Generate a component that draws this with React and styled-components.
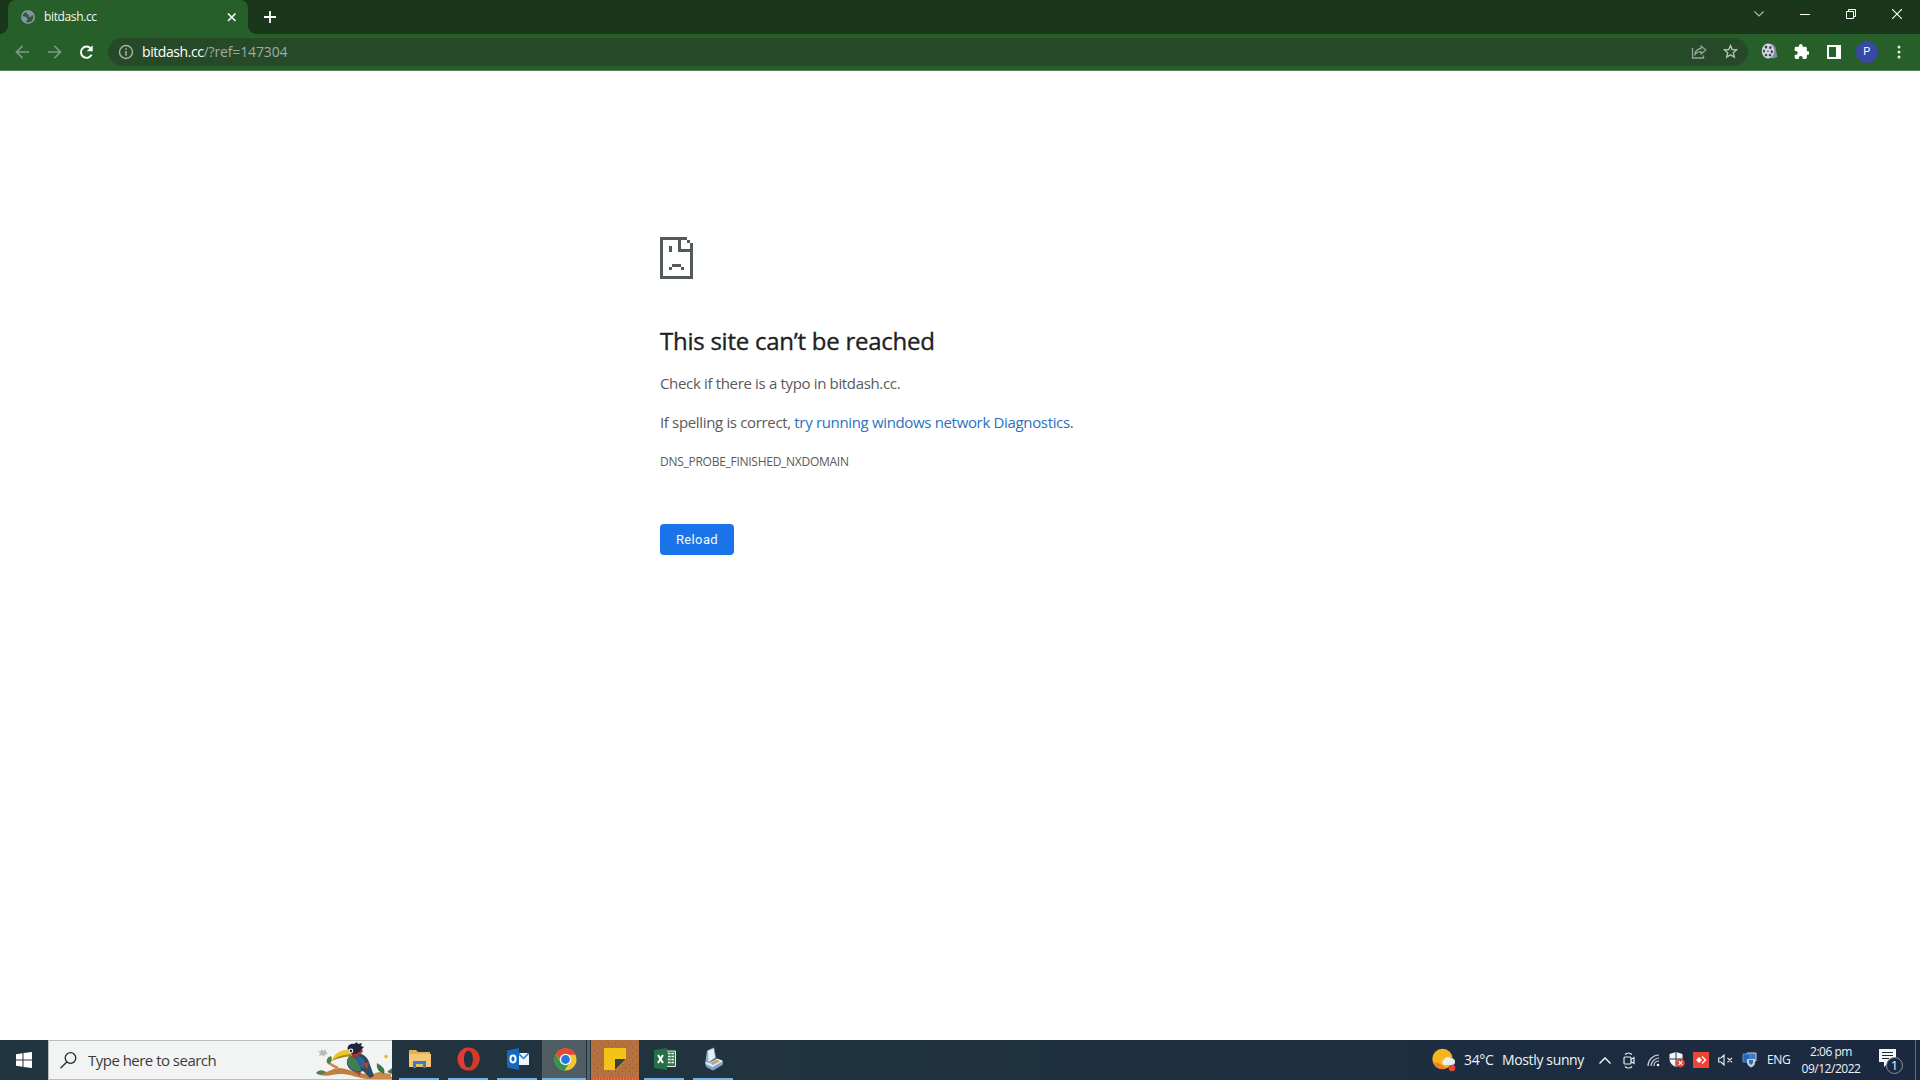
import React from 'react';
import styled, { createGlobalStyle, ThemeProvider } from 'styled-components';

const theme = {
  frame: '#1b371b',
  toolbar: '#275f2a',
  omnibox: '#264a28',
  link: '#2b71bd',
  text: '#595a5a',
  heading: '#202124',
  blue: '#1a73e8',
  underline: '#76b4e8',
};

const GlobalStyle = createGlobalStyle`
  * {
    box-sizing: border-box;
  }

  body {
    margin: 0;
    overflow: hidden;
    background: #fff;
    font-family: 'Open Sans', 'Noto Sans', sans-serif;
  }

  svg {
    display: block;
    flex-shrink: 0;
  }
`;

const Screen = styled.div`
  display: flex;
  flex-direction: column;
  width: 1920px;
  height: 1080px;
`;

/* Browser chrome */

const TitleBar = styled.div`
  display: flex;
  height: 34px;
  padding-left: 8px;
  background: ${p => p.theme.frame};
`;

const Tab = styled.div`
  position: relative;
  display: flex;
  align-items: center;
  width: 240px;
  height: 34px;
  padding: 0 9px 0 13px;
  border-radius: 8px 8px 0 0;
  background: ${p => p.theme.toolbar};

  &::before,
  &::after {
    content: '';
    position: absolute;
    bottom: 0;
    width: 8px;
    height: 8px;
  }

  &::before {
    left: -8px;
    background: radial-gradient(circle at 0 0, transparent 7.5px, ${p => p.theme.toolbar} 8px);
  }

  &::after {
    right: -8px;
    background: radial-gradient(circle at 100% 0, transparent 7.5px, ${p => p.theme.toolbar} 8px);
  }
`;

const TabTitle = styled.span`
  flex: 1;
  margin-left: 9px;
  color: #f4f8f2;
  font-size: 12px;
  line-height: 16px;
  letter-spacing: -0.37px;
`;

const NewTab = styled.div`
  display: flex;
  align-items: center;
  margin-left: 16px;
`;

const WindowButtons = styled.div`
  display: flex;
  margin-left: auto;
  height: 28px;
`;

const WindowButton = styled.div`
  display: flex;
  align-items: center;
  justify-content: center;
  width: 46px;
`;

const Toolbar = styled.div`
  display: flex;
  align-items: center;
  height: 37px;
  padding: 0 0 1px 15px;
  border-bottom: 1px solid #578059;
  background: ${p => p.theme.toolbar};
`;

const NavButton = styled.div`
  display: flex;
  width: ${p => p.width || 32}px;
`;

const Omnibox = styled.div`
  display: flex;
  align-items: center;
  width: 1640px;
  height: 28px;
  padding: 0 10px 0 10px;
  border-radius: 14px;
  background: ${p => p.theme.omnibox};
`;

const Url = styled.div`
  flex: 1;
  margin-left: 8px;
  color: #9eaaa4;
  font-size: 14px;
  line-height: 20px;
  letter-spacing: -0.13px;

  > span {
    color: #fff;
    letter-spacing: -0.43px;
  }
`;

const OmniboxIcon = styled.div`
  margin-left: ${p => p.gap || 0}px;
`;

const Extension = styled.div`
  display: flex;
  justify-content: center;
  width: 32.5px;
`;

const Extensions = styled.div`
  display: flex;
  align-items: center;
  margin-left: 5px;
`;

const Avatar = styled.div`
  width: 22px;
  height: 22px;
  border-radius: 50%;
  background: #3949a3;
  color: #fff;
  font: 11px/22px Roboto, sans-serif;
  text-align: center;
`;

/* Error page */

const Page = styled.main`
  display: flex;
  flex: 1;
  flex-direction: column;
  align-items: flex-start;
  padding: 166px 0 0 660px;
  color: ${p => p.theme.text};
`;

const Heading = styled.h1`
  margin: 45px 0 0;
  color: ${p => p.theme.heading};
  font-size: 24px;
  font-weight: 500;
  line-height: 34px;
  letter-spacing: -0.25px;
  -webkit-text-stroke: 0.35px ${p => p.theme.heading};
`;

const Message = styled.p`
  margin: ${p => p.top}px 0 0;
  font-size: 15px;
  line-height: 22px;
  letter-spacing: -0.34px;
`;

const DiagnosticsLink = styled.a`
  color: ${p => p.theme.link};
`;

const ErrorCode = styled.div`
  margin-top: 19px;
  font-size: 12px;
  line-height: 20px;
  letter-spacing: -0.27px;
`;

const ReloadButton = styled.button`
  width: 74px;
  height: 31px;
  margin: 52px 0 0;
  padding: 0;
  border: 0;
  border-radius: 4px;
  background: ${p => p.theme.blue};
  color: #f4f9ff;
  font: 400 13px/31px Roboto, sans-serif;
  letter-spacing: 0.35px;
`;

/* Taskbar */

const Taskbar = styled.footer`
  display: flex;
  height: 40px;
  background: linear-gradient(90deg, #20343f 0%, #20333f 40%, #1d2e41 75%, #1b2940 100%);
`;

const StartButton = styled.div`
  display: flex;
  align-items: center;
  justify-content: center;
  width: 48px;
`;

const SearchBox = styled.div`
  display: flex;
  align-items: center;
  width: 344px;
  padding-left: 11px;
  border: 1px solid #b9bcbf;
  border-right: 0;
  background: #f2f4f4;
`;

const SearchText = styled.span`
  flex: 1;
  margin-left: 11px;
  color: #3a3a3a;
  font-size: 15px;
  line-height: 22px;
  letter-spacing: -0.52px;
  white-space: nowrap;
`;

const Apps = styled.div`
  display: flex;
  margin-left: 3px;
`;

const AppButton = styled.div`
  display: flex;
  align-items: center;
  justify-content: center;
  width: 49px;
  height: 40px;
  padding-bottom: 2px;
  background: linear-gradient(${p => p.theme.underline}, ${p => p.theme.underline}) 4px 100% / 40px 2px no-repeat;
`;

const ActiveApp = styled(AppButton)`
  padding-right: 2px;
  background:
    linear-gradient(${p => p.theme.underline}, ${p => p.theme.underline}) 0 100% / 44px 2px no-repeat,
    linear-gradient(90deg, transparent 44px, #20343f 44px, #20343f 45.5px, #566269 45.5px, #566269 48px, #2b3b44 48px),
    radial-gradient(circle, #35704c 0.6px, transparent 0.9px) 0 0 / 7px 6px,
    #515b64;
`;

const AlertApp = styled(AppButton)`
  width: 48px;
  margin-right: 1px;
  background:
    repeating-linear-gradient(90deg, #e8502d 0, #e8502d 2px, #d98534 2px, #d98534 3px) 0 100% / 100% 2px no-repeat,
    radial-gradient(circle, #85563a 0.5px, transparent 0.9px) 0 0 / 7px 7px,
    radial-gradient(circle, #85563a 0.5px, transparent 0.9px) 3px 3px / 7px 7px,
    #b5713e;
`;

const Tray = styled.div`
  display: flex;
  align-items: center;
  margin-left: auto;
  color: #eef3f7;
`;

const Weather = styled.div`
  display: flex;
  align-items: center;
  width: 161px;
  font-size: 14px;
  line-height: 20px;
  letter-spacing: -0.36px;
  white-space: nowrap;
`;

const Temperature = styled.span`
  width: 38px;
  margin-left: 8px;
`;

const TrayIcon = styled.div`
  display: flex;
  justify-content: center;
  width: 24px;
`;

const Language = styled.span`
  width: 36px;
  padding: 0 0 2px 6px;
  font-size: 12px;
  letter-spacing: -0.4px;
`;

const Clock = styled.div`
  width: 68px;
  padding-bottom: 1px;
  font-size: 12px;
  line-height: 17px;
  letter-spacing: -0.48px;
  text-align: center;
`;

const ActionCenter = styled.div`
  position: relative;
  width: 36px;
  height: 24px;
  margin-left: 14px;
`;

const Badge = styled.span`
  position: absolute;
  top: 9px;
  left: 7px;
  width: 17px;
  height: 17px;
  border: 1px solid #8b939c;
  border-radius: 50%;
  background: #1b2940;
  font-size: 13px;
  line-height: 15px;
  text-align: center;
`;

const ShowDesktop = styled.div`
  width: 5px;
  height: 40px;
  border-left: 1px solid #66707f;
`;

const Globe = () => (
  <svg width="14" height="14" viewBox="0 0 14 14">
    <circle cx="7" cy="7" r="6.2" fill="#31593e" stroke="#9aa8b3" strokeWidth="1.3" />
    <path d="M1.2 6 4.5 6.8 6.6 8.5 6 10.4 4.8 12.6 2 10.5zM6 1.2 11 2 13 5.5 10.8 5.2 9.5 7 7.6 6.4 7.8 4.6 5.3 4z" fill="#8295a1" />
  </svg>
);

const Arrow = ({ forward }) => (
  <svg width="15" height="14" viewBox="0 0 15 14" fill="none" stroke="#7f9b90" strokeWidth="1.7">
    <path d={forward ? 'M1 7H13.5M7.5 1 13.5 7 7.5 13' : 'M14 7H1.5M7.5 1 1.5 7 7.5 13'} />
  </svg>
);

const Reload = () => (
  <svg width="15" height="16" viewBox="0 0 16 16">
    <path d="M13.4 11A6 6 0 1 1 12.5 4.2" fill="none" stroke="#fff" strokeWidth="2.1" />
    <path d="M14.6.8V7.1H8.3z" fill="#fff" />
  </svg>
);

const Film = () => (
  <svg width="17" height="17" viewBox="0 0 17 17">
    <path d="M8 1C12 0 14.8 3 15 7.5L16.5 14 12 15.5 6 14z" fill="#858a9c" />
    <ellipse cx="7" cy="8" rx="6.2" ry="7.4" fill="#d5d7de" />
    <g fill="#3e475a">
      <ellipse cx="5" cy="4" rx="1.3" ry="1.5" />
      <ellipse cx="9.3" cy="4.4" rx="1.3" ry="1.5" />
      <ellipse cx="3" cy="8" rx="1.1" ry="1.6" />
      <ellipse cx="10.8" cy="8.7" rx="1.1" ry="1.6" />
      <ellipse cx="5" cy="12.1" rx="1.3" ry="1.4" />
      <ellipse cx="9" cy="12.2" rx="1.2" ry="1.4" />
      <circle cx="7" cy="8.2" r="0.8" />
    </g>
  </svg>
);

const Puzzle = () => (
  <svg width="15" height="15" viewBox="1 1 21 21">
    <path fill="#fff" d="M20.5 11H19V7c0-1.1-.9-2-2-2h-4V3.5a2.5 2.5 0 0 0-5 0V5H4c-1.1 0-2 .9-2 2v3.8H3.500c1.500 0 2.700 1.200 2.700 2.700s-1.200 2.700-2.700 2.700H2V20c0 1.100.9 2 2 2h3.800v-1.500c0-1.500 1.200-2.700 2.700-2.700s2.700 1.200 2.700 2.700V22H17c1.100 0 2-.9 2-2v-4h1.500a2.500 2.500 0 0 0 0-5z" />
  </svg>
);

// 11 x 14 grid of 3px cells
const SadFile = () => (
  <svg width="33" height="42" viewBox="0 0 11 14" shapeRendering="crispEdges" fill="#535a5e">
    <path d="M0 0H9V1H7V4H10V2H11V14H0zM1 1V13H10V5H6V1z" fillRule="evenodd" />
    <path d="M9 1H10V2H9zM3 3H4V5H3zM4 9H7V10H4zM3 10H4V11H3zM7 10H8V11H7z" />
  </svg>
);

const Toucan = () => (
  <svg width="77" height="37" viewBox="0 0 77 37">
    <path d="M6 7 8.5 9 11 7 11 10 13 12 10 12.500 9 15 7 13 4 14 5 11 3 9 6 9.500z" fill="#b9bbbd" />
    <circle cx="71" cy="14.5" r="1.8" fill="#f2b91c" />
    <path d="M5 31C13 31 17 26 25 26 34 27 41 31 51 32 60 32 68 35 77 35V37H52C42 36 35 32 27 32 18 32 13 35 5 33z" fill="#c08043" />
    <path d="M21 27 13 22 14 20 24 25M54 33 64 30 76 32V37H56z" fill="#cf8a4b" />
    <path d="M1 31C4 27 8 28 11 30 8 33 4 34 1 31zM12 21C11 17 13 15 16 14 18 18 16 21 14 22z" fill="#50804b" />
    <path d="M62 21C67 24 71 27 69 32 64 30 61 27 62 21zM72 30 77 26V32z" fill="#377b43" />
    <path d="M36 11C45 9 52 14 54 20L59 34 55 36 48 29 42 31C35 28 31 25 32 18z" fill="#2c4965" />
    <path d="M35 14C42 16 45 20 46 29 38 30 33 26 32 19z" fill="#447d50" />
    <path d="M41 13 49 17 49 27 43 23z" fill="#28649a" />
    <path d="M47 20 54 21 52 28zM39 29 46 30 45 34z" fill="#a0483a" />
    <path d="M33 8C31 4 36 1 39 2L42 0 43 2 47 1 46 4 49 5 47 7C46 12 41 15 36 14z" fill="#20263a" />
    <path d="M35 12C41 13 45 10 47 7L48 9C46 13 41 16 36 15z" fill="#a93732" />
    <path d="M35 8C27 7 19 11 17 19 23 15 28 15 37 14z" fill="#efc22d" />
    <path d="M19 17C25 13 30 13 36 12L37 14C29 15 23 16 17 19z" fill="#a48727" />
    <circle cx="36" cy="9" r="2.4" fill="#dfe6ea" />
    <circle cx="36" cy="9" r="1.2" fill="#1b2638" />
  </svg>
);

const Explorer = () => (
  <svg width="23" height="20" viewBox="0 0 23 20">
    <path d="M1 1H8L10 3H22V18H1z" fill="#e8b14e" />
    <path d="M1 5H23V18H1z" fill="#f2c778" />
    <path d="M5 12H18V19H15V15H8V19H5z" fill="#377fc5" />
    <path d="M8 15H15V18H8z" fill="#e2bd6c" />
  </svg>
);

const Opera = () => (
  <svg width="23" height="24" viewBox="0 0 23 24">
    <path d="M11.500.500A11 11.500 0 1 0 11.500 23.500A11 11.500 0 1 0 11.500.500M11.500 3.500C14.300 3.500 16 7 16 12S14.300 20.500 11.500 20.500 7 17 7 12 8.700 3.500 11.500 3.500" fillRule="evenodd" fill="#e23b31" />
    <path d="M14 1C20 2 23 7 22.500 12S19 22 14 23.300C10.500 23 9 21.500 8.300 19.400 9.200 20.200 10.300 20.500 11.500 20.500 14.300 20.500 16 17 16 12S14.300 3.500 11.500 3.500C10.300 3.500 9.500 4 8.600 4.800 9.300 2.500 11 1 14 1" fill="#d2392b" />
  </svg>
);

const Outlook = () => (
  <svg width="24" height="22" viewBox="0 0 24 22">
    <path d="M12 5H23V17H12z" fill="#eef5fb" />
    <path d="M12 5 17.500 10.500 23 5" fill="none" stroke="#2879c8" strokeWidth="1.500" />
    <path d="M1 2.500 13 0V22L1 19.500z" fill="#1668bf" />
    <ellipse cx="7" cy="11" rx="2.600" ry="3.400" fill="none" stroke="#fff" strokeWidth="2" />
  </svg>
);

const Chrome = () => (
  <svg width="23" height="23" viewBox="0 0 24 24">
    <circle cx="12" cy="12" r="11.500" fill="#f4c52f" />
    <path d="M2 6.200A11.500 11.500 0 0 1 22.500 7H12L8 15z" fill="#e64634" />
    <path d="M2 6.200A11.500 11.500 0 0 0 11 23.500L16.500 14.500 7 15z" fill="#32964b" />
    <circle cx="12" cy="12" r="6" fill="#f4f7f8" />
    <circle cx="12" cy="12" r="4.600" fill="#2777e1" />
  </svg>
);

const Sticky = () => (
  <svg width="22" height="22" viewBox="0 0 22 22">
    <path d="M0 0H22V11H11V22H0z" fill="#f3c414" />
    <path d="M11 11H22L11 22z" fill="#3b433e" />
    <path d="M22 11V12L12 22H11z" fill="#bba42c" />
  </svg>
);

const Excel = () => (
  <svg width="22" height="22" viewBox="0 0 22 22">
    <path d="M12 3H21.500V18.500H12z" fill="#36764f" stroke="#e4ede6" />
    <path d="M14 5.500H20M14 8.500H20M14 11.500H20M14 14.500H20" stroke="#edf4ee" strokeWidth="1.600" />
    <path d="M17 4V18" stroke="#36764f" strokeWidth="0.800" />
    <path d="M0 2 13 0V22L0 20z" fill="#277047" />
    <path d="M4 7 9 15M9 7 4 15" stroke="#fff" strokeWidth="2" />
  </svg>
);

const Scanner = () => (
  <svg width="19" height="24" viewBox="0 0 19 24">
    <path d="M3 3.500 10 .500 12 11 4 16.500 1.500 14z" fill="#8facca" />
    <path d="M4 4 9.500 1.500 11 10.500 4.500 15z" fill="#e6eff5" />
    <path d="M1 14.500 5 16 13 11.500 18.500 13.500V17L8.500 23 2 19z" fill="#dfeaf3" />
    <path d="M2 17 8.500 20 18.500 14.500V18L9 23.500 3 20.500z" fill="#7ea4d2" />
    <path d="M6 16.300 12.500 12.800 16 14.200 9 18z" fill="#c5a478" />
  </svg>
);

const Sunny = () => (
  <svg width="24" height="24" viewBox="0 0 24 24">
    <circle cx="10.500" cy="11" r="10.200" fill="#f5b51e" />
    <path d="M1 14C7 14 10 18 15 20 9 23 3 20 1 14" fill="#ec8127" />
    <path d="M12 17A3 3 0 0 1 12 11.500 4.500 4.500 0 0 1 19.500 10.500 3.200 3.200 0 0 1 20 17z" fill="#e9eef3" />
    <circle cx="20" cy="20" r="3.300" fill="#e64731" />
  </svg>
);

const Action = () => (
  <svg width="17" height="19" viewBox="0 0 17 19">
    <path d="M0 1H17V14H10L5 19V14H0z" fill="#f5f7f9" />
    <path d="M3 4.500H14M3 7.500H14M3 10.500H10" stroke="#1b2940" strokeWidth="1.200" />
  </svg>
);

const BrowserChrome = () => (
  <header>
    <TitleBar>
      <Tab>
        <Globe />
        <TabTitle>bitdash.cc</TabTitle>
        <svg width="14" height="14" viewBox="0 0 14 14" stroke="#f3f7f2" strokeWidth="1.700">
          <path d="M3 3.500 10.500 11M10.500 3.500 3 11" />
        </svg>
      </Tab>
      <NewTab>
        <svg width="12" height="12" viewBox="0 0 12 12" stroke="#fff" strokeWidth="1.800">
          <path d="M6 0V12M0 6H12" />
        </svg>
      </NewTab>
      <WindowButtons>
        <WindowButton>
          <svg width="10" height="6" viewBox="0 0 10 6" fill="none" stroke="#aab8aa" strokeWidth="1.200">
            <path d="M.500.500 5 5 9.500.500" />
          </svg>
        </WindowButton>
        <WindowButton>
          <svg width="10" height="1"><path d="M0 .500H10" stroke="#fff" /></svg>
        </WindowButton>
        <WindowButton>
          <svg width="10" height="10" viewBox="0 0 10 10" fill="none" stroke="#fff">
            <path d="M.500 2.500H7.500V9.500H.500zM2.500 2.500V.500H9.500V7.500H7.500" />
          </svg>
        </WindowButton>
        <WindowButton>
          <svg width="10" height="10" viewBox="0 0 10 10" stroke="#fff" strokeWidth="1.100">
            <path d="M0 0 10 10M10 0 0 10" />
          </svg>
        </WindowButton>
      </WindowButtons>
    </TitleBar>
    <Toolbar>
      <NavButton><Arrow /></NavButton>
      <NavButton><Arrow forward /></NavButton>
      <NavButton width={29}><Reload /></NavButton>
      <Omnibox>
        <svg width="16" height="16" viewBox="0 0 16 16" fill="none" stroke="#a6b3a9" strokeWidth="1.400">
          <circle cx="8" cy="8" r="6.500" />
          <path d="M8 7V11.700M8 4.300V5.800" strokeWidth="1.500" />
        </svg>
        <Url><span>bitdash.cc</span>/?ref=147304</Url>
        <OmniboxIcon>
          <svg width="16" height="14" viewBox="0 0 16 14" fill="none" stroke="#93a597" strokeWidth="1.300">
            <path d="M1.500 3V13H12.500V10.500" />
            <path d="M10 1 14.800 5 10 9V6.700C7 6.700 5 7.800 3.700 10 4 6.500 6 4 10 3.500z" strokeLinejoin="round" />
          </svg>
        </OmniboxIcon>
        <OmniboxIcon gap={16}>
          <svg width="15" height="15" viewBox="0 0 15 15" fill="none" stroke="#b3c2b6" strokeWidth="1.400">
            <path d="M7.500 1.500 9.200 5.500 13.600 5.900 10.300 8.800 11.300 13.100 7.500 10.800 3.700 13.100 4.700 8.800 1.400 5.900 5.800 5.500z" />
          </svg>
        </OmniboxIcon>
      </Omnibox>
      <Extensions>
        <Extension><Film /></Extension>
        <Extension><Puzzle /></Extension>
        <Extension>
          <svg width="14" height="14" viewBox="0 0 14 14">
            <path d="M0 0H14V14H0zM2 2V12H9V2z" fillRule="evenodd" fill="#fff" />
          </svg>
        </Extension>
        <Extension><Avatar>P</Avatar></Extension>
        <Extension>
          <svg width="4" height="14" viewBox="0 0 4 14" fill="#e3ece2">
            <circle cx="2" cy="2" r="1.500" /><circle cx="2" cy="7" r="1.500" /><circle cx="2" cy="12" r="1.500" />
          </svg>
        </Extension>
      </Extensions>
    </Toolbar>
  </header>
);

const ErrorPage = () => (
  <Page>
    <SadFile />
    <Heading>This site can’t be reached</Heading>
    <Message top={14}>Check if there is a typo in bitdash.cc.</Message>
    <Message top={17}>
      If spelling is correct, <DiagnosticsLink>try running windows network Diagnostics</DiagnosticsLink>.
    </Message>
    <ErrorCode>DNS_PROBE_FINISHED_NXDOMAIN</ErrorCode>
    <ReloadButton>Reload</ReloadButton>
  </Page>
);

const SystemTray = () => (
  <Tray>
    <Weather>
      <Sunny />
      <Temperature>34°C</Temperature>
      <span>Mostly sunny</span>
    </Weather>
    <TrayIcon>
      <svg width="12" height="7" viewBox="0 0 12 7" fill="none" stroke="#fff" strokeWidth="1.300"><path d="M.500 6.500 6 1 11.500 6.500" /></svg>
    </TrayIcon>
    <TrayIcon>
      <svg width="12" height="17" viewBox="0 0 12 17" fill="none" stroke="#e7edf2" strokeWidth="1.200">
        <rect x="1" y="5" width="7" height="7" rx="1" />
        <path d="M8 7.500 11 5.500V11.500L8 9.500M2 2.500C4 .500 7 .500 9 2.500M2 14.500C4 16.500 7 16.500 9 14.500" />
      </svg>
    </TrayIcon>
    <TrayIcon>
      <svg width="13" height="13" viewBox="0 0 13 13" fill="none" stroke="#c6cfd8" strokeWidth="1.200">
        <path d="M1 12C1 6 6 1 12 1M4 12C4 8 8 4 12 4M7 12C7 9 9 7 12 7" />
        <circle cx="11" cy="11" r="1.300" fill="#fff" stroke="none" />
      </svg>
    </TrayIcon>
    <TrayIcon>
      <svg width="16" height="16" viewBox="0 0 16 16">
        <path d="M7 0 13.500 2V7C13.500 11 10 14 7 15 4 14 .500 11 .500 7V2z" fill="#f2f4f5" />
        <path d="M7 0V15M.500 7H13.500" stroke="#26364b" />
        <circle cx="11.500" cy="11" r="4.400" fill="#df4534" />
        <path d="M9.700 9.200 13.300 12.800M13.300 9.200 9.700 12.800" stroke="#fff" strokeWidth="1.200" />
      </svg>
    </TrayIcon>
    <TrayIcon>
      <svg width="16" height="16" viewBox="0 0 16 16">
        <path d="M0 0H16V16H0z" fill="#ed4435" />
        <path d="M6 5 9 8 6 11 3 8z" fill="#fff" />
        <path d="M9 4.500 12.500 8 9 11.500" fill="none" stroke="#fff" strokeWidth="1.300" />
      </svg>
    </TrayIcon>
    <TrayIcon>
      <svg width="15" height="12" viewBox="0 0 15 12" fill="none" stroke="#eef2f5" strokeWidth="1.100">
        <path d="M.700 4H3L6 1V11L3 8H.700zM9.500 3.800 14 8.300M14 3.800 9.500 8.300" />
      </svg>
    </TrayIcon>
    <TrayIcon>
      <svg width="15" height="16" viewBox="0 0 15 16">
        <path d="M5 1H14V9H5z" fill="#3e79c2" stroke="#c5d1dc" />
        <path d="M1 2H8V10H1z" fill="#2568b7" stroke="#4f91da" />
        <path d="M5 7H13V11C13 13 11 15 9 15.500 6 14 5 12 5 10z" fill="#c5ced7" />
        <path d="M7 8H11V11L9 13 7 11z" fill="#386da9" />
      </svg>
    </TrayIcon>
    <Language>ENG</Language>
    <Clock>
      <div>2:06 pm</div>
      <div>09/12/2022</div>
    </Clock>
    <ActionCenter>
      <Action />
      <Badge>1</Badge>
    </ActionCenter>
    <ShowDesktop />
  </Tray>
);

const App = () => (
  <ThemeProvider theme={theme}>
    <GlobalStyle />
    <Screen>
      <BrowserChrome />
      <ErrorPage />
      <Taskbar>
        <StartButton>
          <svg width="16" height="16" viewBox="0 0 16 16" fill="#fff">
            <path d="M0 2.200 6.500 1.300V7.500H0zM7.500 1.100 16 0V7.500H7.500zM0 8.500H6.500V14.700L0 13.800zM7.500 8.500H16V16L7.500 14.900z" />
          </svg>
        </StartButton>
        <SearchBox>
          <svg width="17" height="17" viewBox="0 0 17 17" fill="none" stroke="#252b30" strokeWidth="1.300">
            <circle cx="10.500" cy="6" r="5.300" />
            <path d="M6.800 10 .500 16.300" />
          </svg>
          <SearchText>Type here to search</SearchText>
          <Toucan />
        </SearchBox>
        <Apps>
          <AppButton><Explorer /></AppButton>
          <AppButton><Opera /></AppButton>
          <AppButton><Outlook /></AppButton>
          <ActiveApp><Chrome /></ActiveApp>
          <AlertApp><Sticky /></AlertApp>
          <AppButton><Excel /></AppButton>
          <AppButton><Scanner /></AppButton>
        </Apps>
        <SystemTray />
      </Taskbar>
    </Screen>
  </ThemeProvider>
);

export default App;
